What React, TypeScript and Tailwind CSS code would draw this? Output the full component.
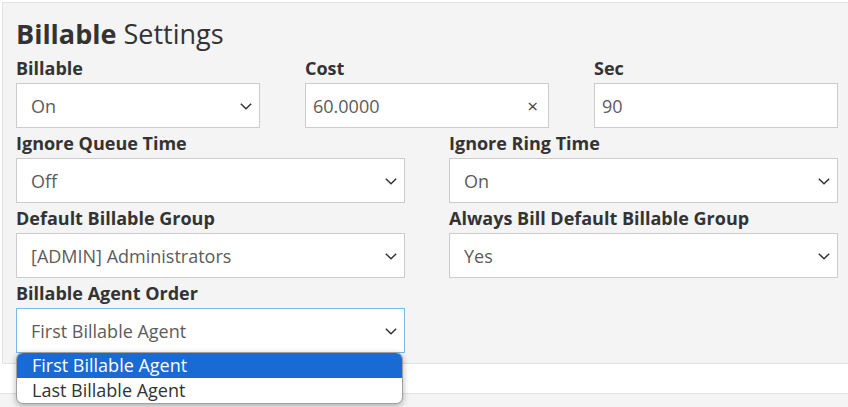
import React from "react";

const Chevron = () => (
  <svg width="12" height="7" viewBox="0 0 12 7" fill="none" className="shrink-0">
    <path d="M0.8 0.8l5.2 5 5.2-5" stroke="#333" strokeWidth="1.5" />
  </svg>
);

const Label = ({ children }: { children: React.ReactNode }) => (
  <div className="h-[30px] leading-[30px] text-[18px] font-bold text-[#333]">{children}</div>
);

const SelectBox = ({ value, focused }: { value: string; focused?: boolean }) => (
  <div
    className={`h-[45px] bg-white border flex items-center justify-between pl-[14px] pr-[7px] pt-[2px] ${
      focused ? "border-[#7bb8ee]" : "border-[#cccccc]"
    }`}
  >
    <span className="text-[18px] text-[#5c5c5c]">{value}</span>
    <Chevron />
  </div>
);

const TextBox = ({ value, clear }: { value: string; clear?: boolean }) => (
  <div className="h-[45px] bg-white border border-[#cccccc] flex items-center justify-between pl-[7px] pr-[10px] pt-[2px]">
    <span className="text-[18px] text-[#5c5c5c]">{value}</span>
    {clear && <span className="text-[19px] text-[#444] leading-none">×</span>}
  </div>
);

function App() {
  return (
    <div
      className="w-[848px] h-[407px] overflow-hidden bg-white pt-[2px]"
      style={{ fontFamily: '"Open Sans", "Liberation Sans", sans-serif' }}
    >
      <div className="ml-[2px] bg-[#f4f4f4] border-t border-l border-b border-[#e2e2e2] pt-[11px] pb-[10px] pl-[13px] pr-[10px]">
        <h1 className="h-[39px] leading-[40px] text-[27px] text-[#333]">
          <span className="font-bold">Billable</span> Settings
        </h1>

        <div className="grid grid-cols-3 gap-x-[45px]">
          <div>
            <Label>Billable</Label>
            <SelectBox value="On" />
          </div>
          <div>
            <Label>Cost</Label>
            <TextBox value="60.0000" clear />
          </div>
          <div>
            <Label>Sec</Label>
            <TextBox value="90" />
          </div>
        </div>

        <div className="grid grid-cols-2 gap-x-[44px]">
          <div>
            <Label>Ignore Queue Time</Label>
            <SelectBox value="Off" />
          </div>
          <div>
            <Label>Ignore Ring Time</Label>
            <SelectBox value="On" />
          </div>
          <div>
            <Label>Default Billable Group</Label>
            <SelectBox value="[ADMIN] Administrators" />
          </div>
          <div>
            <Label>Always Bill Default Billable Group</Label>
            <SelectBox value="Yes" />
          </div>
          <div className="relative">
            <Label>Billable Agent Order</Label>
            <SelectBox value="First Billable Agent" focused />
            <div className="absolute left-0 top-[calc(100%-1px)] w-[387px] z-10 bg-white border border-[#a0a0a0] rounded-[7px] overflow-hidden shadow-[0_2px_6px_rgba(0,0,0,0.3)]">
              <div className="h-[25px] leading-[25px] pl-[15px] text-[18px] bg-[#1a6ad3] text-white">
                First Billable Agent
              </div>
              <div className="h-[25px] leading-[24px] pl-[15px] text-[18px] text-[#333]">
                Last Billable Agent
              </div>
            </div>
          </div>
        </div>
      </div>
      <div className="h-[30px] bg-white border-b border-[#e2e2e2]" />
      <div className="h-[20px] bg-[#f4f4f4]" />
    </div>
  );
}

export default App;
